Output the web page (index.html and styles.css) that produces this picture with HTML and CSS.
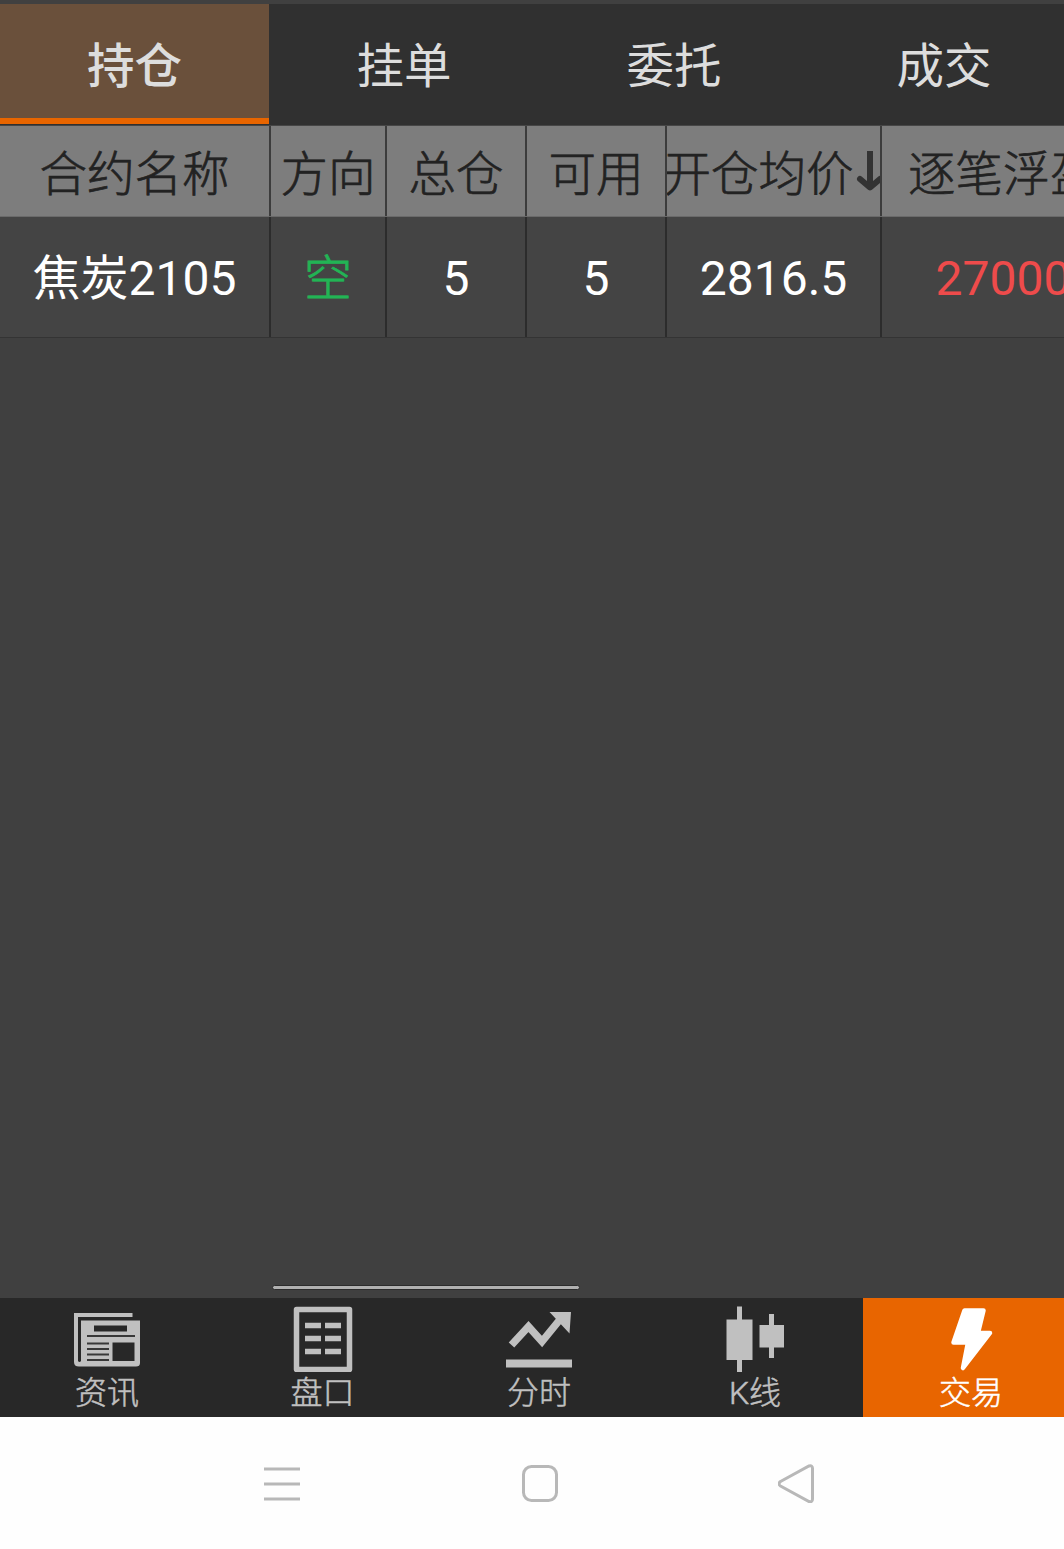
FILE: index.html
```
<!DOCTYPE html>
<html lang="zh-CN">
<head>
  <meta charset="utf-8">
  <title>交易</title>
  <link rel="stylesheet" href="styles.css">
</head>
<body>

  <div class="app">
    <div class="tabs">
      <div class="tab active"><span>持仓</span></div>
      <div class="tab"><span>挂单</span></div>
      <div class="tab"><span>委托</span></div>
      <div class="tab"><span>成交</span></div>
    </div>

    <div class="content">
      <div class="row head">
        <div class="cell"><span>合约名称</span></div>
        <div class="cell"><span>方向</span></div>
        <div class="cell"><span>总仓</span></div>
        <div class="cell"><span>可用</span></div>
        <div class="cell sort">
          <span>开仓均价</span>
          <svg width="28" height="44" viewBox="0 0 28 44">
            <path d="M14 3V40" fill="none" stroke="#333" stroke-width="6" />
            <path d="M4 31L14 39.500L24 31" fill="none" stroke="#333" stroke-width="6" stroke-linecap="round" stroke-linejoin="round" />
          </svg>
        </div>
        <div class="cell last"><span>逐笔浮盈</span></div>
      </div>
      <div class="row data">
        <div class="cell"><span>焦炭2105</span></div>
        <div class="cell short"><span>空</span></div>
        <div class="cell"><span>5</span></div>
        <div class="cell"><span>5</span></div>
        <div class="cell"><span>2816.5</span></div>
        <div class="cell last profit"><span>27000</span></div>
      </div>
      <div class="scrollbar"></div>
    </div>

    <div class="nav">
      <div class="nav-item">
        <svg width="66" height="66" viewBox="0 0 66 66">
          <path d="M0 7H58.500V11H4V55Q5.500 57 7 55V14.500H66V57Q66 60.500 62 60.500H5Q0 60.500 0 56Z" fill="#c0c0c0" />
          <path d="M20 19.500H53V25.500H20ZM38.500 36.500H60.500V55H38.500Z" fill="#282828" />
          <path d="M13 30H61M13 37.500H35M13 43H35M13 48.500H35M13 54H35" stroke="#383838" stroke-width="2" />
        </svg>
        <span>资讯</span>
      </div>
      <div class="nav-item">
        <svg width="66" height="66" viewBox="0 0 66 66">
          <rect x="6.500" y="3.500" width="53" height="60" fill="none" stroke="#c0c0c0" stroke-width="5.500" stroke-linejoin="round" />
          <path d="M15 19.500H31M35 19.500H51M15 32.500H31M35 32.500H51M15 45.500H31M35 45.500H51" stroke="#c0c0c0" stroke-width="5.500" />
        </svg>
        <span>盘口</span>
      </div>
      <div class="nav-item">
        <svg width="66" height="66" viewBox="0 0 66 66">
          <path d="M5.500 39L22.500 20.500L36 35.500L56 11" fill="none" stroke="#c0c0c0" stroke-width="7.500" />
          <path d="M43.500 6H65L63.500 27.500ZM0 53.500H66V61.500H0Z" fill="#c0c0c0" />
        </svg>
        <span>分时</span>
      </div>
      <div class="nav-item">
        <svg width="66" height="66" viewBox="0 0 66 66">
          <path d="M15 .5H20V13.500H30.500V54H20V66.500H15V54H4.500V13.500H15ZM47 8H52V19H62V41.500H52V52H47V41.500H37.500V19H47Z" fill="#c0c0c0" />
        </svg>
        <span>K线</span>
      </div>
      <div class="nav-item active">
        <svg width="66" height="66" viewBox="0 0 66 66">
          <path d="M26.500 4.500H45.500L40 27H52L25 62L30 36.500H15.500Z" fill="#fff" stroke="#fff" stroke-width="4.500" stroke-linejoin="round" />
        </svg>
        <span>交易</span>
      </div>
    </div>

    <div class="system">
      <svg width="40" height="40" viewBox="0 0 40 40">
        <path d="M2 6H38M2 21H38M2 36H38" stroke="#b8b8b8" stroke-width="3" />
      </svg>
      <svg width="40" height="40" viewBox="0 0 40 40">
        <rect x="3.500" y="3.500" width="33" height="34" rx="8" fill="none" stroke="#b8b8b8" stroke-width="3" />
      </svg>
      <svg width="40" height="40" viewBox="0 0 40 40">
        <path d="M2.500 18.500L31 3Q34.500 2 34.500 5.500V36Q34.500 39.500 31 38.500L2.500 23Q-.5 21 2.500 18.500Z" fill="none" stroke="#b8b8b8" stroke-width="3" />
      </svg>
    </div>
  </div>

</body>
</html>
```

FILE: styles.css
```
* {
  box-sizing: border-box;
}
body {
  margin: 0;
  font-family: Roboto, "Noto Sans CJK SC", sans-serif;
  background: #fff;
}
.app {
  display: flex;
  flex-direction: column;
  width: 1064px;
  height: 1549px;
  overflow: hidden;
}
.tabs {
  display: grid;
  grid-template-columns: 269px 270px 270px 270px;
  height: 126px;
  border-top: 4px solid #404040;
  border-bottom: 1px solid #464646;
  background: #303030;
}
.tab {
  display: flex;
  align-items: center;
  justify-content: center;
  height: 120px;
  padding-top: 6px;
  font-size: 47.500px;
  line-height: 56px;
  color: #ddd;
}
.tab.active {
  background: #6a503b;
  border-bottom: 6px solid #e86500;
  padding-top: 12px;
  font-weight: 500;
}
.content {
  flex: 1;
  display: flex;
  flex-direction: column;
  background: #404040;
}
.row {
  display: grid;
  grid-template-columns: 271px 116px 140px 140px 215px 242px;
  font-size: 48px;
  line-height: 56px;
}
.cell {
  display: flex;
  align-items: center;
  justify-content: center;
  padding-top: 3px;
  border-right: 2px solid #2c2c2c;
  overflow: hidden;
  white-space: nowrap;
}
.cell.last {
  border-right: none;
}
.head {
  height: 91px;
  background: #7d7d7d;
  border-bottom: 1px solid #6a6a6a;
  color: #222;
  font-size: 47.500px;
  font-weight: 300;
  -webkit-text-stroke: 0.7px #222;
}
.head .cell {
  padding-top: 8px;
  border-color: #3c3c3c;
}
.sort svg {
  flex: none;
  margin: -10px 0 0 2px;
}
.data {
  height: 121px;
  background: #444;
  border-bottom: 1px solid #343434;
  color: #fff;
}
.short {
  color: #22b455;
  font-weight: 300;
  -webkit-text-stroke: 0.8px #22b455;
}
.profit {
  color: #ee4b4b;
}
.scrollbar {
  width: 308px;
  height: 5px;
  margin: auto 0 8px 272px;
  border: 1px solid #2c2c2c;
  border-radius: 3px;
  background: #b0b0b0;
}
.nav {
  display: grid;
  grid-template-columns: 214px 217px 216px 216px 216px;
  height: 119px;
  background: #282828;
}
.nav-item {
  display: flex;
  flex-direction: column;
  align-items: center;
  padding-top: 8px;
  font-size: 32px;
  line-height: 43px;
  font-weight: 300;
  -webkit-text-stroke: 0.5px #c0c0c0;
  color: #c0c0c0;
}
.nav-item.active {
  background: #e86500;
  color: #fff;
  -webkit-text-stroke-color: #fff;
}
.system {
  display: flex;
  gap: 218px;
  height: 132px;
  padding: 46px 0 0 262px;
  background: #fefefe;
}
```
